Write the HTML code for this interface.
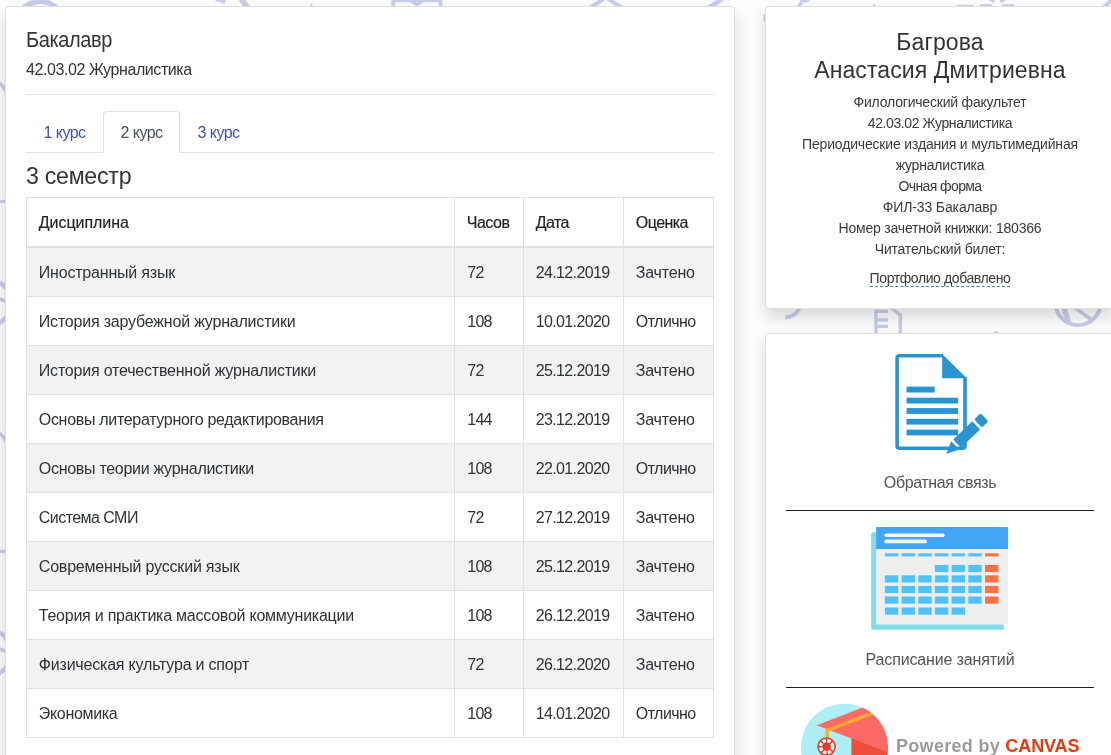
<!DOCTYPE html>
<html lang="ru">
<head>
<meta charset="utf-8">
<title>Зачетная книжка</title>
<style>
*{box-sizing:border-box}
html,body{margin:0;padding:0}
body{width:1111px;height:755px;overflow:hidden;position:relative;background:#fdfdfd;font-family:"Liberation Sans",sans-serif;color:#212529;font-size:16px;line-height:1.5}
#bg{position:absolute;left:0;top:0;width:1111px;height:755px}
.card{position:absolute;background:#fff;border:1px solid rgba(0,0,0,.125);border-radius:4px;box-shadow:0 8px 16px rgba(0,0,0,.15);will-change:transform}
#left{left:5px;top:6px;width:730px;height:800px}
#prof{left:765px;top:6px;width:350px;height:303px}
#links{left:765px;top:333px;width:350px;height:470px}
#fg{position:absolute;left:0;top:0;width:1111px;height:755px;will-change:transform}
.c{position:absolute;left:0;width:348px;text-align:center;white-space:nowrap;line-height:1}
.nm{font-size:23px;color:#333;letter-spacing:.1px}
.inf{font-size:14px;color:#3a3a3a;letter-spacing:-.2px}
.lbl{font-size:16px;color:#555;letter-spacing:-.3px}
.sep{position:absolute;left:20px;width:308px;height:1px;background:#222}
#pf{display:inline-block;border-bottom:1px dashed #2a8fd5;padding-bottom:1px}
#pw{position:absolute;left:130px;top:402.5px;font-size:18px;font-weight:700;line-height:1;white-space:nowrap;color:#9a9a9a;letter-spacing:.3px}
#pw b{color:#e53a10;letter-spacing:-.1px}
.abs{position:absolute;white-space:nowrap;line-height:1}
#t1{left:20px;top:23.3px;font-size:21.5px;letter-spacing:-.4px;color:#333;transform:scaleX(.93);transform-origin:0 0}
#t2{left:20px;top:55px;font-size:16px;letter-spacing:-.42px;color:#333}
#hr1{position:absolute;left:20px;top:87px;width:688px;height:1px;background:#e3e3e3}
#tabs{position:absolute;left:20px;top:104px;width:688px;height:42px;border-bottom:1px solid #dee2e6}
.tab{position:absolute;top:0;height:42px;width:77px;text-align:center;font-size:16px;line-height:44.4px;color:#3f51b5;letter-spacing:-.5px}
.tab.act{color:#495057;background:#fff;border:1px solid #dee2e6;border-bottom-color:#fff;border-radius:4px 4px 0 0;line-height:42.4px}
#h3{left:20px;top:157px;font-size:24px;color:#333;letter-spacing:-.3px;transform:scaleX(.967);transform-origin:0 0}
table{position:absolute;left:20px;top:190px;width:687px;border-collapse:collapse;table-layout:fixed}
th,td{border:1px solid #dee2e6;padding:2px 0 0 11.8px;height:49px;text-align:left;font-weight:400;font-size:16px;letter-spacing:-.2px;line-height:24px;vertical-align:middle;white-space:nowrap;color:#2e3338}
th{border-bottom:2px solid #dee2e6;color:#212529;height:49px;letter-spacing:-.05px;-webkit-text-stroke:.18px #212529}
th:nth-child(2){letter-spacing:-.5px}
th:nth-child(3){letter-spacing:-.6px}
th:nth-child(4){letter-spacing:-.55px}
td:nth-child(2){letter-spacing:-.8px;padding-left:12.3px}
td:nth-child(3){letter-spacing:-.65px}
tbody tr:nth-child(odd){background:#f2f2f2}
tbody tr:first-child td{height:50px}
</style>
</head>
<body>
<svg id="bg" viewBox="0 0 1111 755">
<g fill="none" stroke="#c9cdea" stroke-width="5" stroke-linecap="butt">
<circle cx="40" cy="26" r="24.5"/>
<path d="M29,5.5 Q38,0.5 49,-1" stroke-width="4"/>
<path d="M240.5,-1 Q245,3 247.5,8" stroke-width="5.5"/>
<path d="M588,9 L606,-2.5 L624,9" stroke-width="4"/>
<path d="M722.5,-1 L706.5,9" stroke-width="4.5"/>
<path d="M800.5,-2 A5,5 0 0 0 809,-1.5" stroke-width="4"/>
<path d="M802,2 L798,7" stroke-width="3.5"/>
<path d="M1113,-1 L1103,8" stroke-width="4"/>
<path d="M-2,82 Q4,86 8,95" stroke-width="3.6"/>
<path d="M-1,201.5 H8" stroke-width="3.2"/>
<path d="M-2,432 Q4,436 8,445" stroke-width="3.6"/>
<path d="M-1,551.5 H8" stroke-width="3.2"/>
<path d="M-2,782 Q4,786 8,795" stroke-width="3.6"/>
<path d="M-1,901.5 H8" stroke-width="3.2"/>
<path d="M-2,282 Q5,285 8,291" stroke-width="4.2"/>
<path d="M-2,298.5 L8,302" stroke-width="3.8"/>
<path d="M8,314.5 Q5,320 -2,324" stroke-width="4.4"/>
<path d="M-2,632 Q5,635 8,641" stroke-width="4.2"/>
<path d="M-2,648.5 L8,652" stroke-width="3.8"/>
<path d="M8,664.5 Q5,670 -2,674" stroke-width="4.4"/>
<path d="M-2,982 Q5,985 8,991" stroke-width="4.2"/>
<path d="M-2,998.5 L8,1002" stroke-width="3.8"/>
<path d="M8,1014.5 Q5,1020 -2,1024" stroke-width="4.4"/>
<path d="M785.1,317.5 A16,16 0 0 0 800,307.2" stroke-width="3.8"/>
<path d="M875.9,333 V311.4 H888 M876,320 H888 M876,326.3 H888" stroke-width="3.3"/>
<path d="M891.5,308 L900.3,315 V333" stroke-width="3.5"/>
<circle cx="1078" cy="302.3" r="22.8" stroke-width="3.9"/>
<path d="M1071.5,305 L1091,319.5" stroke-width="3.6"/>
<path d="M1062.5,304 L1068.5,322" stroke-width="5.5"/>
</g>
<g fill="#c9cdea">
<path d="M214,0 H226 L224.5,3.9 Z"/>
<path d="M309.5,7 L311.5,3.5 L313.5,7 Z"/>
<path d="M391.3,0 H442.4 V8 H438.6 V2.2 H424 L417,6.5 L410,2.2 H395.1 V8 H391.3 Z"/>
<path d="M872,7 L874.3,3.8 L876.6,7 Z"/>
<rect x="956.5" y="4.8" width="16.6" height="3"/>
<rect x="979.9" y="4.2" width="12" height="3"/>
<rect x="1002.2" y="4.2" width="12" height="3"/>
<path d="M988.5,0 H995 L993.8,3.2 Z M999.5,0 H1006 L1001,3.4 Z"/>
<path d="M5,127 L8,124 V131 Z M5,477 L8,474 V481 Z"/>
<rect x="763.5" y="14.5" width="3" height="6.5"/>
<rect x="994.3" y="331.4" width="4" height="3"/>
</g>
</svg>

<div class="card" id="left">
  <div class="abs" id="t1">Бакалавр</div>
  <div class="abs" id="t2">42.03.02 Журналистика</div>
  <div id="hr1"></div>
  <div id="tabs">
    <div class="tab" style="left:0">1 курс</div>
    <div class="tab act" style="left:77px">2 курс</div>
    <div class="tab" style="left:154px">3 курс</div>
  </div>
  <div class="abs" id="h3">3 семестр</div>
  <table>
    <colgroup><col style="width:428px"><col style="width:69px"><col style="width:100px"><col style="width:90px"></colgroup>
    <thead><tr><th>Дисциплина</th><th>Часов</th><th>Дата</th><th>Оценка</th></tr></thead>
    <tbody>
      <tr><td>Иностранный язык</td><td>72</td><td>24.12.2019</td><td>Зачтено</td></tr>
      <tr><td>История зарубежной журналистики</td><td>108</td><td>10.01.2020</td><td style="letter-spacing:-.55px">Отлично</td></tr>
      <tr><td>История отечественной журналистики</td><td>72</td><td>25.12.2019</td><td>Зачтено</td></tr>
      <tr><td style="letter-spacing:-.31px">Основы литературного редактирования</td><td>144</td><td>23.12.2019</td><td>Зачтено</td></tr>
      <tr><td style="letter-spacing:-.29px">Основы теории журналистики</td><td>108</td><td>22.01.2020</td><td style="letter-spacing:-.55px">Отлично</td></tr>
      <tr><td style="letter-spacing:-.55px">Система СМИ</td><td>72</td><td>27.12.2019</td><td>Зачтено</td></tr>
      <tr><td>Современный русский язык</td><td>108</td><td>25.12.2019</td><td>Зачтено</td></tr>
      <tr><td style="letter-spacing:-.24px">Теория и практика массовой коммуникации</td><td>108</td><td>26.12.2019</td><td>Зачтено</td></tr>
      <tr><td>Физическая культура и спорт</td><td>72</td><td>26.12.2020</td><td>Зачтено</td></tr>
      <tr><td style="letter-spacing:-.33px">Экономика</td><td>108</td><td>14.01.2020</td><td style="letter-spacing:-.55px">Отлично</td></tr>
    </tbody>
  </table>
</div>

<div class="card" id="prof">
  <div class="c nm" style="top:24.2px">Багрова</div>
  <div class="c nm" style="top:51.85px">Анастасия Дмитриевна</div>
  <div class="c inf" style="top:88px">Филологический факультет</div>
  <div class="c inf" style="top:109px;letter-spacing:-.4px">42.03.02 Журналистика</div>
  <div class="c inf" style="top:130px;letter-spacing:-.17px">Периодические издания и мультимедийная</div>
  <div class="c inf" style="top:151px">журналистика</div>
  <div class="c inf" style="top:172px;letter-spacing:-.6px">Очная форма</div>
  <div class="c inf" style="top:193px;letter-spacing:-.13px">ФИЛ-33 Бакалавр</div>
  <div class="c inf" style="top:214px">Номер зачетной книжки: 180366</div>
  <div class="c inf" style="top:235px">Читательский билет:</div>
  <div class="c inf" style="top:264px;letter-spacing:-.4px"><span id="pf">Портфолио добавлено</span></div>
</div>
<div class="card" id="links">
  <div class="c lbl" style="top:141.2px;letter-spacing:-.4px">Обратная связь</div>
  <div class="sep" style="top:176px"></div>
  <div class="c lbl" style="top:318.2px;letter-spacing:-.15px">Расписание занятий</div>
  <div class="sep" style="top:353px"></div>
  <div id="pw">Powered by <b>CANVAS</b></div>
</div>
<svg id="fg" viewBox="0 0 1111 755">
<g fill="none" stroke="#2a94d3" stroke-width="3.6" stroke-linejoin="round"><path d="M943,355.8 H899.5 Q897.1,355.8 897.1,358.2 V446 Q897.1,448.3 899.5,448.3 H962.6 Q965,448.3 965,446 V377"/></g>
<path d="M942.2,354 L966.8,378.3 H942.2 Z" fill="#2a94d3"/>
<g fill="#2a94d3"><rect x="906.5" y="386.6" width="28.2" height="5.9"/>
<rect x="906.5" y="397.7" width="51.7" height="5.8"/>
<rect x="906.5" y="408.1" width="51.7" height="5.8"/>
<rect x="906.5" y="418.8" width="51.7" height="5.8"/>
<rect x="906.5" y="429.6" width="51.7" height="5.8"/>
</g>
<g transform="translate(946.7,453.6) rotate(-43.8)"><rect x="39" y="-8" width="6" height="16" fill="#fff"/><path d="M-0.6,0 L11.8,-5.8 V5.8 Z" fill="#2a94d3"/><rect x="14.4" y="-5.6" width="26.4" height="11.2" fill="#2a94d3"/><rect x="43.4" y="-5.7" width="9" height="11.4" rx="1.9" fill="#2a94d3"/></g>
<rect x="871.2" y="532.2" width="132.6" height="97.6" rx="1.5" fill="#80deea"/>
<rect x="876.1" y="527" width="132" height="97.6" rx="1" fill="#eeeeee"/>
<path d="M877.1,527 H1007.1 Q1008.1,527 1008.1,528 V548.9 H876.1 V528 Q876.1,527 877.1,527 Z" fill="#42a5f5"/>
<rect x="884.3" y="533.4" width="60.5" height="3.6" rx="1.8" fill="#f5f5f5"/>
<rect x="884.3" y="539.6" width="42.7" height="3.6" rx="1.8" fill="#f5f5f5"/>
<rect x="884.9" y="553.3" width="13.4" height="3.1" fill="#4fc3f7"/>
<rect x="901.6" y="553.3" width="13.4" height="3.1" fill="#4fc3f7"/>
<rect x="918.3" y="553.3" width="13.4" height="3.1" fill="#4fc3f7"/>
<rect x="934.9" y="553.3" width="13.4" height="3.1" fill="#4fc3f7"/>
<rect x="951.6" y="553.3" width="13.4" height="3.1" fill="#4fc3f7"/>
<rect x="968.3" y="553.3" width="13.4" height="3.1" fill="#4fc3f7"/>
<rect x="985.0" y="553.3" width="13.4" height="3.1" fill="#ff7043"/>
<rect x="934.9" y="564.9" width="13.4" height="7.2" fill="#4fc3f7"/>
<rect x="951.6" y="564.9" width="13.4" height="7.2" fill="#4fc3f7"/>
<rect x="968.3" y="564.9" width="13.4" height="7.2" fill="#4fc3f7"/>
<rect x="985.0" y="564.9" width="13.4" height="7.2" fill="#ff7043"/>
<rect x="884.9" y="575.3" width="13.4" height="7.2" fill="#4fc3f7"/>
<rect x="901.6" y="575.3" width="13.4" height="7.2" fill="#4fc3f7"/>
<rect x="918.3" y="575.3" width="13.4" height="7.2" fill="#4fc3f7"/>
<rect x="934.9" y="575.3" width="13.4" height="7.2" fill="#4fc3f7"/>
<rect x="951.6" y="575.3" width="13.4" height="7.2" fill="#4fc3f7"/>
<rect x="968.3" y="575.3" width="13.4" height="7.2" fill="#4fc3f7"/>
<rect x="985.0" y="575.3" width="13.4" height="7.2" fill="#ff7043"/>
<rect x="884.9" y="585.9" width="13.4" height="7.2" fill="#4fc3f7"/>
<rect x="901.6" y="585.9" width="13.4" height="7.2" fill="#4fc3f7"/>
<rect x="918.3" y="585.9" width="13.4" height="7.2" fill="#4fc3f7"/>
<rect x="934.9" y="585.9" width="13.4" height="7.2" fill="#4fc3f7"/>
<rect x="951.6" y="585.9" width="13.4" height="7.2" fill="#4fc3f7"/>
<rect x="968.3" y="585.9" width="13.4" height="7.2" fill="#4fc3f7"/>
<rect x="985.0" y="585.9" width="13.4" height="7.2" fill="#ff7043"/>
<rect x="884.9" y="596.5" width="13.4" height="7.2" fill="#4fc3f7"/>
<rect x="901.6" y="596.5" width="13.4" height="7.2" fill="#4fc3f7"/>
<rect x="918.3" y="596.5" width="13.4" height="7.2" fill="#4fc3f7"/>
<rect x="934.9" y="596.5" width="13.4" height="7.2" fill="#4fc3f7"/>
<rect x="951.6" y="596.5" width="13.4" height="7.2" fill="#4fc3f7"/>
<rect x="968.3" y="596.5" width="13.4" height="7.2" fill="#4fc3f7"/>
<rect x="985.0" y="596.5" width="13.4" height="7.2" fill="#ff7043"/>
<rect x="884.9" y="607.5" width="13.4" height="7.2" fill="#4fc3f7"/>
<rect x="901.6" y="607.5" width="13.4" height="7.2" fill="#4fc3f7"/>
<rect x="918.3" y="607.5" width="13.4" height="7.2" fill="#4fc3f7"/>
<rect x="934.9" y="607.5" width="13.4" height="7.2" fill="#4fc3f7"/>
<rect x="951.6" y="607.5" width="13.4" height="7.2" fill="#4fc3f7"/>
<defs><clipPath id="lc"><circle cx="844.5" cy="747.4" r="43.6"/></clipPath></defs>
<g clip-path="url(#lc)"><rect x="800" y="703" width="90" height="60" fill="#aeeff5"/><path d="M851.4,737 L900,755 V770 H851.4 Z" fill="#ee4e3c"/><path d="M816.7,725.2 L862.8,707.6 L900,700 L900,757 Z" fill="#ff6a64"/><path d="M825.4,729.2 L872.5,711.6 L873.6,714.6 L828.9,731.4 V738 H825.4 Z" fill="#fbaa2c"/></g>
<circle cx="826.6" cy="746.6" r="9.4" fill="#e53c2b"/>
<circle cx="826.6" cy="746.6" r="6" fill="none" stroke="#fff" stroke-width="3.4" stroke-dasharray="3.3 1.41"/>
<circle cx="826.6" cy="746.6" r="3.4" fill="#e53c2b"/>
</svg>
</body>
</html>
